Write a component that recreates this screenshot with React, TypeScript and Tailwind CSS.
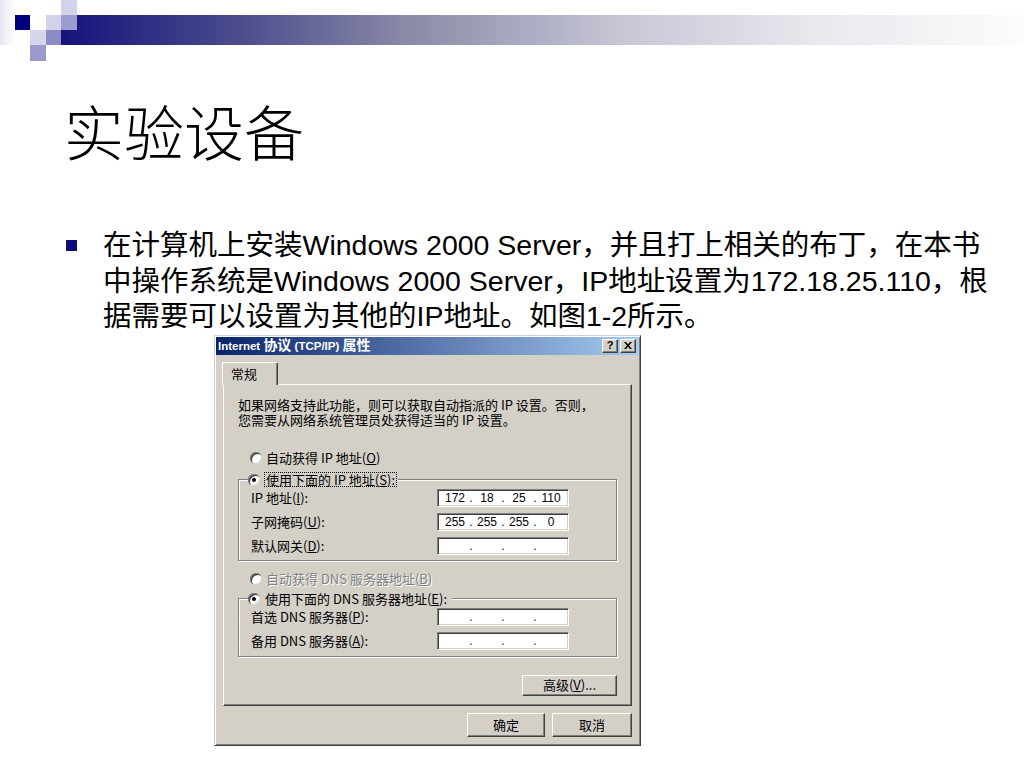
import React from "react";

const IpInput = ({ parts }: { parts: string[] }) => (
  <div className="w-[132px] h-[18px] bg-white border border-t-[#808080] border-l-[#808080] border-r-white border-b-white shadow-[inset_1px_1px_0_#404040,inset_-1px_-1px_0_#d4d0c8] flex items-center pl-[3px] font-['Liberation_Sans',sans-serif] text-[12px] leading-[14px] text-black">
    {parts.map((p, i) => (
      <React.Fragment key={i}>
        {i > 0 && <span className="w-[4px] text-center">.</span>}
        <span className="w-[28px] text-center">{p}</span>
      </React.Fragment>
    ))}
  </div>
);

const Radio = ({ checked }: { checked?: boolean }) => (
  <span className="w-[12px] h-[12px] shrink-0 rounded-full bg-white flex items-center justify-center shadow-[inset_1px_1px_0_#808080,inset_2px_2px_0_#404040,inset_-1px_-1px_0_#d4d0c8]">
    {checked && <span className="w-[4px] h-[4px] rounded-full bg-black" />}
  </span>
);

const Row = ({ label, parts }: { label: React.ReactNode; parts: string[] }) => (
  <div className="h-[18px] flex items-center">
    <span className="w-[186px] whitespace-nowrap">{label}</span>
    <IpInput parts={parts} />
  </div>
);

const WinButton = ({ children, w, h }: { children: React.ReactNode; w: string; h: string }) => (
  <button
    type="button"
    className={`${w} ${h} bg-[#d4d0c8] border border-t-white border-l-white border-r-[#404040] border-b-[#404040] shadow-[inset_-1px_-1px_0_#808080] flex items-center justify-center text-black`}
  >
    {children}
  </button>
);

const TitleBtn = ({ children }: { children: React.ReactNode }) => (
  <span className="w-[16px] h-[14px] bg-[#d4d0c8] border border-t-white border-l-white border-r-[#404040] border-b-[#404040] shadow-[inset_-1px_-1px_0_#808080] flex items-center justify-center">
    {children}
  </span>
);

const Header = () => (
  <div className="h-[61px] grid grid-cols-[15px_15px_16px_15px_16px_1fr] grid-rows-[15px_15px_15px_16px]">
    <div className="col-start-1 row-start-1 row-span-3 bg-[linear-gradient(to_right,#e6e6f2,#ffffff)]" />
    <div className="col-start-5 row-start-1 bg-[#d2d2e8]" />
    <div className="col-start-2 row-start-2 bg-[#00007c]" />
    <div className="col-start-4 row-start-2 bg-[#d2d2e8]" />
    <div className="col-start-5 col-span-2 row-start-2 row-span-2 bg-[linear-gradient(to_right,#14147c_0%,#4a4a8c_18%,#8a8aa8_36%,#c6c6d6_58%,#e8e8ee_78%,#fcfcfc_100%)]" />
    <div className="col-start-5 row-start-2 bg-[#9c9cd0]" />
    <div className="col-start-3 row-start-3 bg-[#d6d6ea]" />
    <div className="col-start-4 row-start-3 bg-[#8c8cc4]" />
    <div className="col-start-3 row-start-4 bg-[#9a9acc]" />
  </div>
);

const Dialog = () => (
  <div className="ml-[214px] w-[427px] bg-[#d4d0c8] border border-t-[#d4d0c8] border-l-[#d4d0c8] border-r-[#404040] border-b-[#404040] p-[1px] shadow-[inset_1px_1px_0_#fff,inset_-1px_-1px_0_#808080] font-['Noto_Sans_CJK_SC',sans-serif] text-[13px] leading-[14px] text-black">
    <div className="h-[18px] flex items-center justify-between pl-[2px] pr-[3px] bg-[linear-gradient(to_right,#0a246a,#a6caf0)]">
      <span className="text-white font-bold text-[11.5px] font-['Liberation_Sans','Noto_Sans_CJK_SC',sans-serif] whitespace-nowrap">
        Internet <span className="text-[14px]">协议</span> (TCP/IP) <span className="text-[14px]">属性</span>
      </span>
      <div className="flex gap-[2px]">
        <TitleBtn>
          <span className="font-bold text-[11px] leading-none font-['Liberation_Sans',sans-serif]">?</span>
        </TitleBtn>
        <TitleBtn>
          <svg width="8" height="7" viewBox="0 0 8 7">
            <path d="M0 0h2l2 2.5L6 0h2L5 3.5 8 7H6L4 4.5 2 7H0l3-3.5z" fill="#000" />
          </svg>
        </TitleBtn>
      </div>
    </div>

    <div className="px-[7px] pt-[7px] pb-[7px]">
      <div className="flex">
        <div className="relative z-10 -ml-[1px] -mb-[1px] w-[56px] h-[23px] bg-[#d4d0c8] border-t border-l border-r border-t-white border-l-white border-r-[#404040] shadow-[inset_-1px_0_0_#808080] rounded-tl-[2px] rounded-tr-[2px] pl-[8px] flex items-center">
          常规
        </div>
      </div>
      <div className="border border-t-white border-l-white border-r-[#404040] border-b-[#404040] shadow-[inset_-1px_-1px_0_#808080] pt-[12px] pb-[9px]">
        <p className="pl-[14px] whitespace-nowrap leading-[15px]">
          如果网络支持此功能，则可以获取自动指派的 IP 设置。否则，
          <br />
          您需要从网络系统管理员处获得适当的 IP 设置。
        </p>

        <div className="mt-[24px] ml-[26px] h-[14px] flex items-center gap-[4px]">
          <Radio />
          <span>
            自动获得 IP 地址(<u>O</u>)
          </span>
        </div>

        <fieldset className="mt-[7px] mx-[14px] border border-[#808080] shadow-[inset_1px_1px_0_#fff,1px_1px_0_#fff]">
          <legend className="ml-[9px] h-[16px] flex items-center gap-[4px] bg-[#d4d0c8] pr-[1px]">
            <Radio checked />
            <span className="border border-dotted border-black px-[1px] leading-[13px]">
              使用下面的 IP 地址(<u>S</u>):
            </span>
          </legend>
          <div className="px-[12px] pt-[1px] pb-[5px] flex flex-col gap-[6px]">
            <Row
              label={
                <>
                  IP 地址(<u>I</u>):
                </>
              }
              parts={["172", "18", "25", "110"]}
            />
            <Row
              label={
                <>
                  子网掩码(<u>U</u>):
                </>
              }
              parts={["255", "255", "255", "0"]}
            />
            <Row
              label={
                <>
                  默认网关(<u>D</u>):
                </>
              }
              parts={["", "", "", ""]}
            />
          </div>
        </fieldset>

        <div className="mt-[11px] ml-[26px] h-[14px] flex items-center gap-[4px]">
          <Radio />
          <span className="text-[#808080] [text-shadow:1px_1px_0_#fff]">
            自动获得 DNS 服务器地址(<u>B</u>)
          </span>
        </div>

        <fieldset className="mt-[5px] mx-[14px] border border-[#808080] shadow-[inset_1px_1px_0_#fff,1px_1px_0_#fff]">
          <legend className="ml-[9px] h-[16px] flex items-center gap-[4px] bg-[#d4d0c8] pr-[4px]">
            <Radio checked />
            <span className="px-[1px]">
              使用下面的 DNS 服务器地址(<u>E</u>):
            </span>
          </legend>
          <div className="px-[12px] pt-[1px] pb-[6px] flex flex-col gap-[6px]">
            <Row
              label={
                <>
                  首选 DNS 服务器(<u>P</u>):
                </>
              }
              parts={["", "", "", ""]}
            />
            <Row
              label={
                <>
                  备用 DNS 服务器(<u>A</u>):
                </>
              }
              parts={["", "", "", ""]}
            />
          </div>
        </fieldset>

        <div className="mt-[18px] mr-[14px] flex justify-end">
          <WinButton w="w-[95px]" h="h-[21px]">
            <span>
              高级(<u>V</u>)...
            </span>
          </WinButton>
        </div>
      </div>

      <div className="mt-[7px] flex justify-end gap-[7px]">
        <WinButton w="w-[78px]" h="h-[24px]">
          确定
        </WinButton>
        <WinButton w="w-[80px]" h="h-[24px]">
          取消
        </WinButton>
      </div>
    </div>
  </div>
);

const App = () => {
  return (
    <div className="w-[1024px] h-[768px] bg-white overflow-hidden">
      <Header />

      <h1 className="mt-[34px] ml-[64px] h-[70px] text-[60px] leading-[70px] font-light text-black font-['Noto_Sans_CJK_SC',serif]">
        实验设备
      </h1>

      <div className="mt-[63px] ml-[66px] flex items-start">
        <span className="mt-[12px] w-[11px] h-[11px] shrink-0 bg-[#0c0c7c]" />
        <p className="ml-[26px] text-[28.5px] leading-[35.5px] text-black whitespace-nowrap font-['Liberation_Sans','Noto_Sans_CJK_SC',sans-serif]">
          在计算机上安装Windows 2000 Server，并且打上相关的布丁，在本书
          <br />
          中操作系统是Windows 2000 Server，IP地址设置为172.18.25.110，根
          <br />
          据需要可以设置为其他的IP地址。如图1-2所示。
        </p>
      </div>

      <Dialog />
    </div>
  );
};

export default App;
